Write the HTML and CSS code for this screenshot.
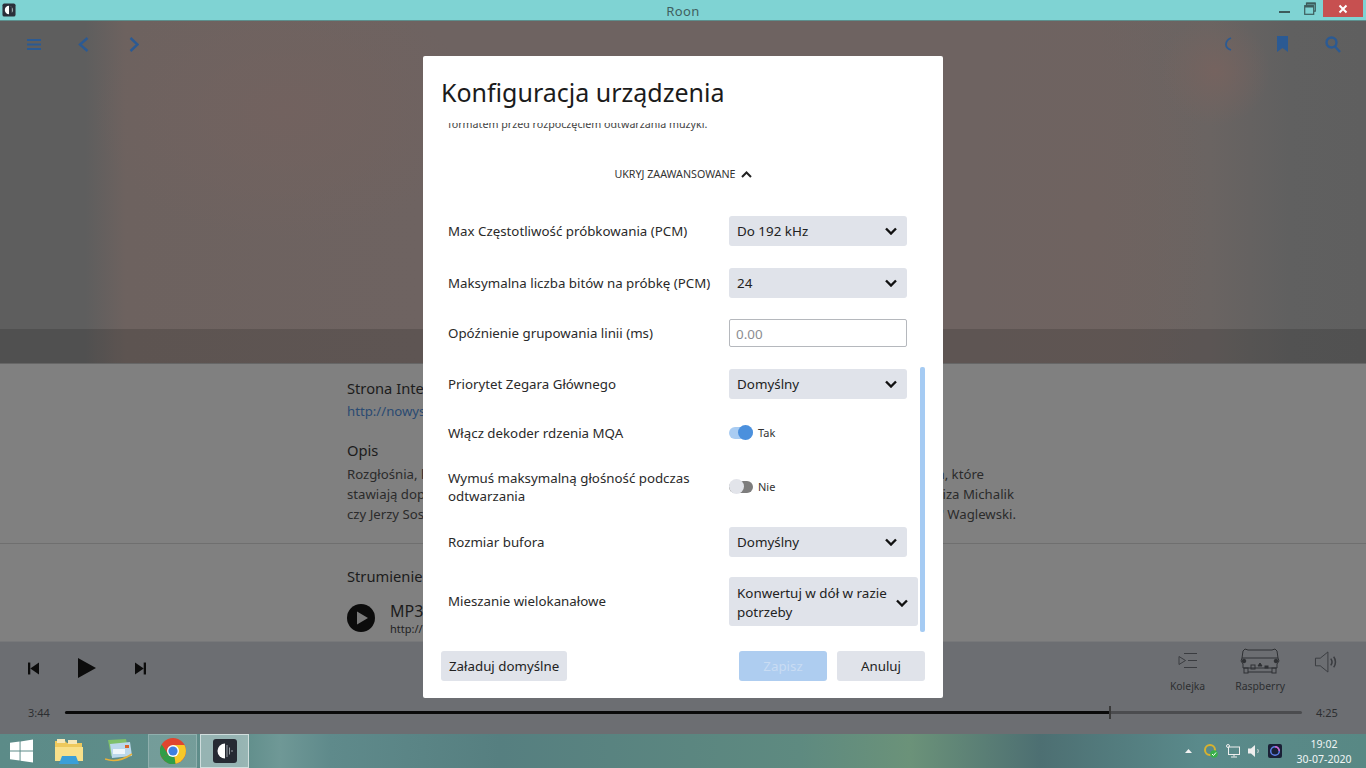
FILE: index.html
```html
<!DOCTYPE html>
<html lang="pl">
<head>
<meta charset="utf-8">
<title>Roon</title>
<link rel="stylesheet" href="styles.css">
</head>
<body>
<div class="screen">
  <header class="titlebar">
    <svg class="app-icon" width="14" height="14" viewBox="0 0 15 15"><rect x="0.5" y="0.5" width="14" height="14" rx="2" fill="#2b2f3a"/><path d="M7.5 3a4.5 4.5 0 0 0 0 9z" fill="#fff"/><path d="M7.5 3a4.5 4.5 0 0 1 3 7.8V4.2z" fill="#9aa"/></svg>
    <span class="title-text">Roon</span>
    <div class="win-controls">
      <svg class="win-min" width="11" height="2" viewBox="0 0 11 2"><rect width="11" height="2" fill="#3d5c5c"/></svg>
      <svg class="win-max" width="12" height="13" viewBox="0 0 12 13" fill="none" stroke="#3d5c5c" stroke-width="1.2"><rect x="0.7" y="3.7" width="9" height="8.6" fill="#7fd3d3"/><path d="M2.5 3.5V1h8.8v8.2H10"/><path d="M2.5 1.6h8.8" stroke-width="2"/><path d="M1 4.5h8.5" stroke-width="2"/></svg>
      <div class="win-close"><svg width="10" height="10" viewBox="0 0 10 10" stroke="#fff" stroke-width="2"><path d="M1.5 1.5l7 7M8.500 1.500l-7 7"/></svg></div>
    </div>
  </header>

  <main class="app">
    <section class="hero">
      <nav class="topnav">
        <div class="nav-group">
          <div class="nav-btn"><svg width="14" height="11" viewBox="0 0 14 11" fill="#2b5a93"><rect width="14" height="2"/><rect y="4.5" width="14" height="2"/><rect y="9" width="14" height="2"/></svg></div>
          <div class="nav-btn"><svg width="11" height="15" viewBox="0 0 11 15" fill="none" stroke="#2b5a93" stroke-width="2.4"><path d="M9.500 1L2 7.500 9.500 14"/></svg></div>
          <div class="nav-btn"><svg class="nudge" width="10" height="15" viewBox="0 0 10 15" fill="none" stroke="#2b5a93" stroke-width="2.4"><path d="M1.500 1L8.500 7.500 1.500 14"/></svg></div>
        </div>
        <div class="nav-group">
          <div class="nav-btn"><svg class="moon" width="7" height="14" viewBox="0 0 7 14" fill="none" stroke="#2b5a93" stroke-width="1.8"><path d="M6 1C2.500 2.500 1 5 1 7.500S3 12 6 13"/></svg></div>
          <div class="nav-btn"><svg width="11" height="16" viewBox="0 0 11 16" fill="#2b5a93"><path d="M0 0h11v16l-5.500-4L0 16z"/></svg></div>
          <div class="nav-btn"><svg width="16" height="17" viewBox="0 0 16 17" fill="none" stroke="#2b5a93" stroke-width="2.4"><circle cx="6.500" cy="6.500" r="5"/><path d="M10 10.500l5 5.500"/></svg></div>
        </div>
      </nav>
      <div class="hero-band"></div>
    </section>

    <section class="content">
      <div class="content-block">
        <h3 class="sec-title">Strona Inte</h3>
        <a class="link">http://nowysw</a>
        <h3 class="sec-title opis">Opis</h3>
        <p class="desc-line line-a"><span>Rozgłośnia, k</span><span>n, które</span></p>
        <p class="desc-line line-b"><span>stawiają dopi</span><span>liza Michalik</span></p>
        <p class="desc-line line-c"><span>czy Jerzy Sosn</span><span>" Waglewski.</span></p>
      </div>
      <div class="streams">
        <h3 class="sec-title">Strumienie</h3>
        <div class="stream">
          <svg width="28" height="28" viewBox="0 0 28 28"><circle cx="14" cy="14" r="14" fill="#0c0c0c"/><path d="M10 7.500l11 6.500-11 6.500z" fill="#7a7a7a"/></svg>
          <div class="stream-text">
            <div class="stream-name">MP3</div>
            <div class="stream-url">http://n</div>
          </div>
        </div>
      </div>
    </section>

    <footer class="player">
      <div class="player-top">
        <div class="transport">
          <svg width="11" height="13" viewBox="0 0 12 13" fill="#0c0c0c"><rect width="2.500" height="13"/><path d="M12 0v13L2.500 6.500z"/></svg>
          <svg class="t-play" width="18" height="20" viewBox="0 0 19 21" fill="#0c0c0c"><path d="M0 0l19 10.500L0 21z"/></svg>
          <svg width="11" height="13" viewBox="0 0 12 13" fill="#0c0c0c"><path d="M0 0v13l9.500-6.500z"/><rect x="9.500" width="2.500" height="13"/></svg>
        </div>
        <div class="outputs">
          <div class="out-item queue">
            <svg width="20" height="16" viewBox="0 0 20 16" fill="none" stroke="#3a3c40" stroke-width="1"><path d="M1 3.500v8l6.500-4zM6 .5h13M10 7.500h9M6 14.500h13"/></svg>
            <span>Kolejka</span>
          </div>
          <div class="out-item device">
            <svg width="40" height="26" viewBox="0 0 40 26" fill="none" stroke="#2f3134" stroke-width="1"><path d="M3 3l2-2 3 1h24l3-1 2 2 1 7H2z"/><path d="M2 10l-1 3 2 3v4h34v-4l2-3-1-3"/><circle cx="4" cy="13" r="1.800" fill="#2f3134"/><circle cx="36" cy="13" r="1.800" fill="#2f3134"/><rect x="4" y="20" width="4" height="5"/><rect x="32" y="20" width="4" height="5"/><path d="M8 24h24"/><rect x="11" y="17" width="4" height="4"/><path d="M18 18l2-3 2 3z" fill="#2f3134"/><rect x="25" y="18" width="3" height="2" fill="#2f3134"/></svg>
            <span>Raspberry</span>
          </div>
          <svg class="volume" width="24" height="22" viewBox="0 0 24 23" fill="none" stroke="#3a3c40"><path d="M1 7.500v8h5l8 6.500V1L6 7.500z" stroke-width="1"/><path d="M17 8c1.500 2 1.500 5 0 7" stroke-width="1.600"/><path d="M20 6c2.500 3 2.500 8 0 11" stroke-width="1.600"/></svg>
        </div>
      </div>
      <div class="progress-row">
        <span class="time">3:44</span>
        <div class="track"><div class="track-done"></div><div class="track-thumb"></div></div>
        <span class="time">4:25</span>
      </div>
    </footer>
  </main>

  <div class="taskbar">
    <svg class="win-logo" width="23" height="24" viewBox="0 0 24 24" fill="#fff"><path d="M0 3.500l10-1.400v9.300H0zM11 2l13-2v11.400H11zM0 12.500h10v9.400L0 20.500zM11 12.500h13V24l-13-1.900z"/></svg>
    <svg class="tb-icon explorer" width="30" height="27" viewBox="0 0 30 27"><path d="M1 3h10l2 2h15v18H1z" fill="#eec95c"/><path d="M3 1h8v4H3zM14 2h9v4h-9z" fill="#f6e8b8"/><path d="M1 9h28v14H1z" fill="#f8e08a"/><path d="M8 18h14l3 8H5z" fill="#3a9fd8"/></svg>
    <svg class="tb-icon mail" width="28" height="26" viewBox="0 0 28 26"><path d="M3 2l18-1 3 14-18 3z" fill="#7fc06b"/><path d="M5 6l20-2 2 14-20 2z" fill="#bcd8ec"/><path d="M8 11h12v5H8z" fill="#f0f6fb"/><path d="M20 7h4v3h-4z" fill="#d9642a"/><path d="M0 21c8 3 18 1 27-5" fill="none" stroke="#e6b23c" stroke-width="1.600"/></svg>
    <div class="tb-tile"><svg width="26" height="26" viewBox="0 0 26 26"><circle cx="13" cy="13" r="13" fill="#e0452f"/><path d="M13 13L2 20a13 13 0 0 0 14 6z" fill="#2f9e48"/><path d="M13 7h11.500a13 13 0 0 1-9 18.700z" fill="#f7c928"/><path d="M1.700 6.500L8 16 2 20A13 13 0 0 1 1.700 6.500z" fill="#2f9e48"/><circle cx="13" cy="13" r="6" fill="#fff"/><circle cx="13" cy="13" r="4.600" fill="#3f7fe0"/></svg></div>
    <div class="tb-tile active"><svg width="24" height="24" viewBox="0 0 24 24"><rect width="24" height="24" rx="3" fill="#262a33"/><path d="M12 4.500a7.500 7.500 0 0 0 0 15z" fill="#fff"/><path d="M14 6v12M16.500 8.500v7M19 11v2" stroke="#9aa0a8" stroke-width="1"/></svg></div>
    <div class="tray">
      <svg class="caret" width="7" height="4" viewBox="0 0 7 4" fill="#f2f2f2"><path d="M0 4l3.500-4L7 4z"/></svg>
      <svg width="14" height="14" viewBox="0 0 14 14"><circle cx="6" cy="6" r="5" fill="none" stroke="#d8b22e" stroke-width="2"/><circle cx="10" cy="10" r="3.800" fill="#38b04a"/><path d="M8 10l1.500 1.500L12 8.500" fill="none" stroke="#fff"/></svg>
      <svg width="14" height="14" viewBox="0 0 14 14" fill="none" stroke="#eee"><rect x="2.500" y="3" width="11" height="7.500"/><path d="M8 10.500v2M5 13h6"/><circle cx="2" cy="2" r="1.500"/></svg>
      <svg width="12" height="14" viewBox="0 0 12 14"><path d="M0 4.500h3L7 1v12L3 9.500H0z" fill="#eee"/><path d="M9.500 5c1 1.200 1 2.800 0 4" stroke="#cfd8d8" fill="none"/></svg>
      <svg width="14" height="14" viewBox="0 0 14 14"><rect width="14" height="14" rx="2" fill="#1a2036"/><circle cx="7" cy="7" r="4.300" fill="none" stroke="#5d7fe8" stroke-width="1.500"/><path d="M7 2.700A4.300 4.300 0 0 1 11.300 7" fill="none" stroke="#d063c9" stroke-width="1.500"/></svg>
      <div class="clock"><div>19:02</div><div>30-07-2020</div></div>
    </div>
  </div>

  <div class="modal">
    <h2 class="modal-title">Konfiguracja urządzenia</h2>
    <div class="modal-body">
      <p class="clipped">formatem przed rozpoczęciem odtwarzania muzyki.</p>
      <div class="advanced"><span>UKRYJ ZAAWANSOWANE</span><svg width="11" height="7" viewBox="0 0 11 7" fill="none" stroke="#222" stroke-width="2"><path d="M1 6l4.500-4.500L10 6"/></svg></div>
      <div class="row r1"><span class="label">Max Częstotliwość próbkowania (PCM)</span><div class="select"><span>Do 192 kHz</span><svg class="chev" width="12" height="8" viewBox="0 0 12 8" fill="none" stroke="#111" stroke-width="2.400"><path d="M1 1.500l5 5 5-5"/></svg></div></div>
      <div class="row r2"><span class="label">Maksymalna liczba bitów na próbkę (PCM)</span><div class="select"><span>24</span><svg class="chev" width="12" height="8" viewBox="0 0 12 8" fill="none" stroke="#111" stroke-width="2.400"><path d="M1 1.500l5 5 5-5"/></svg></div></div>
      <div class="row r3"><span class="label">Opóźnienie grupowania linii (ms)</span><div class="input">0.00</div></div>
      <div class="row r4"><span class="label">Priorytet Zegara Głównego</span><div class="select"><span>Domyślny</span><svg class="chev" width="12" height="8" viewBox="0 0 12 8" fill="none" stroke="#111" stroke-width="2.400"><path d="M1 1.500l5 5 5-5"/></svg></div></div>
      <div class="row r5"><span class="label">Włącz dekoder rdzenia MQA</span><div class="toggle on"><div class="tg-track"><div class="tg-knob"></div></div><span>Tak</span></div></div>
      <div class="row r6"><span class="label wrap">Wymuś maksymalną głośność podczas odtwarzania</span><div class="toggle off"><div class="tg-track"><div class="tg-knob"></div></div><span>Nie</span></div></div>
      <div class="row r7"><span class="label">Rozmiar bufora</span><div class="select"><span>Domyślny</span><svg class="chev" width="12" height="8" viewBox="0 0 12 8" fill="none" stroke="#111" stroke-width="2.400"><path d="M1 1.500l5 5 5-5"/></svg></div></div>
      <div class="row r8"><span class="label">Mieszanie wielokanałowe</span><div class="select tall"><span>Konwertuj w dół w razie potrzeby</span><svg class="chev" width="12" height="8" viewBox="0 0 12 8" fill="none" stroke="#111" stroke-width="2.400"><path d="M1 1.500l5 5 5-5"/></svg></div></div>
      <div class="scrollbar"></div>
    </div>
    <div class="modal-foot">
      <div class="btn">Załaduj domyślne</div>
      <div class="foot-right">
        <div class="btn primary">Zapisz</div>
        <div class="btn plain">Anuluj</div>
      </div>
    </div>
  </div>
</div>
</body>
</html>
```
FILE: styles.css
```css
* { box-sizing: border-box; }
html, body { margin: 0; padding: 0; }
body { font-family: "Noto Sans", sans-serif; color: #222; overflow: hidden; }
h2, h3, p { margin: 0; font-weight: 400; }

.screen { position: relative; width: 1366px; height: 768px; display: flex; flex-direction: column; overflow: hidden; background: #808080; }

.titlebar { height: 21px; flex: none; background: #7fd3d3; border-bottom: 1px solid #5c8f8d; display: flex; align-items: center; position: relative; padding-left: 2px; }
.app-icon { display: block; }
.title-text { position: absolute; left: 0; right: 0; top: 2px; text-align: center; font-size: 13px; line-height: 18px; color: #3f5f60; letter-spacing: .4px; }
.win-controls { position: absolute; right: 3px; top: 0; display: flex; }
.win-min { margin: 11px 14px 0 0; }
.win-max { margin: 2px 7px 0 0; }
.win-close { width: 40px; height: 17px; background: #c75050; display: flex; align-items: center; justify-content: center; }

.app { flex: 1; display: flex; flex-direction: column; min-height: 0; }
.hero { height: 343px; flex: none; position: relative; display: flex; flex-direction: column; justify-content: space-between;
  background:
    radial-gradient(ellipse 55px 55px at 1215px 50px, #75635f, transparent),
    radial-gradient(ellipse 120px 300px at 1090px 200px, #6f6360, transparent),
    radial-gradient(ellipse 190px 130px at 285px 90px, #72625f, transparent),
    linear-gradient(90deg, #5e5e5e 0, #5e5e5e 85px, #6d625f 125px, #6e6361 420px, #6e6361 1100px, #6a6462 1210px, #606060 1290px, #5f5f5f 100%);
}
.topnav { display: flex; justify-content: space-between; padding: 0 8.5px; height: 46px; }
.nav-group { display: flex; }
.nav-btn { width: 50px; height: 46px; display: flex; align-items: center; justify-content: center; }
.nudge { margin-left: 1px; }
.moon { margin-right: 9px; }
.hero-band { height: 35px; background: rgba(0,0,0,.14); border-bottom: 1px solid #666; }

.content { flex: 1; min-height: 0; background: #808080; overflow: hidden; display: flex; flex-direction: column; }
.content-block { padding: 14px 0 0 347px; height: 180px; border-bottom: 1px solid #6f6f6f; }
.sec-title { font-size: 14.7px; line-height: 20px; color: #1c1c1c; }
.link { display: block; font-size: 13.2px; line-height: 20px; margin-top: 3px; color: #2a4a72; }
.opis { margin-top: 19px; }
.desc-line { display: flex; justify-content: space-between; font-size: 13.2px; line-height: 20px; color: #2b2b2b; }
.line-a { width: 637px; margin-top: 4px; }
.line-b { width: 667px; }
.line-c { width: 669px; }
.streams { padding: 22px 0 0 347px; }
.stream { display: flex; align-items: center; gap: 15px; margin-top: 13px; }
.stream-text { margin-top: 2px; }
.stream-name { font-size: 16px; line-height: 20px; color: #1c1c1c; }
.stream-url { font-size: 11px; line-height: 16px; color: #222; }

.player { height: 93px; flex: none; background: #6c6e72; border-top: 1px solid #77787a; display: flex; flex-direction: column; justify-content: space-between; }
.player-top { display: flex; justify-content: space-between; padding: 6px 28px 0 28px; }
.transport { display: flex; align-items: center; height: 40px; }
.t-play { margin: 0 39px; }
.outputs { display: flex; align-items: flex-start; }
.out-item { display: flex; flex-direction: column; align-items: center; font-size: 10.4px; line-height: 14px; color: #2c2e31; }
.queue svg { margin: 5px 0 10px; }
.device { margin-left: 30px; }
.device svg { margin: 0 0 5px; }
.volume { margin: 3px 0 0 29px; }
.progress-row { display: flex; align-items: center; padding: 0 28px 14px 28px; }
.time { font-size: 11px; line-height: 14px; color: #2c2e31; width: 37px; }
.time:last-child { width: 22px; margin-left: 14px; }
.track { flex: 1; height: 3px; margin-bottom: 2px; background: #4b4c4f; position: relative; border-radius: 2px; }
.track-done { width: 1045px; height: 3px; background: #0a0a0a; border-radius: 2px; }
.track-thumb { position: absolute; left: 1044px; top: -5px; width: 2px; height: 13px; background: #3a3a3a; }

.taskbar { height: 34px; flex: none; display: flex; align-items: center; padding-left: 10px; background: linear-gradient(90deg, #5c8b88 0, #5f8d8a 240px, #6f9896 280px, #5f8a8b 330px, #567f80 500px, #5e8a80 800px, #6b9279 910px, #4d6f72 1040px, #5a8a8b 1200px, #588884 100%); }
.win-logo { margin-right: 21px; }
.explorer { margin-right: 21px; }
.mail { margin-right: 15px; }
.tb-tile { width: 49px; height: 34px; background: rgba(255,255,255,.14); border: 1px solid rgba(255,255,255,.2); display: flex; align-items: center; justify-content: center; margin-right: 3px; }
.tb-tile.active { background: rgba(255,255,255,.35); border-color: rgba(255,255,255,.55); }
.tray { margin-left: auto; display: flex; align-items: center; gap: 8px; padding-right: 6px; }
.caret { margin-right: 4px; }
.clock { width: 72px; margin-left: -2px; padding-top: 1px; font-size: 10.5px; line-height: 15px; text-align: center; color: #f1f5f5; }

.modal { position: absolute; left: 423px; top: 56px; width: 520px; height: 642px; background: #fff; border-radius: 2px; display: flex; flex-direction: column; }
.modal-title { font-size: 25px; line-height: 36px; padding: 18px 0 0 18px; color: #1b1b1b; height: 67px; flex: none; }
.modal-body { position: relative; flex: 1; min-height: 0; overflow: hidden; padding: 0 0 0 25px; }
.clipped { font-size: 10.7px; line-height: 16px; color: #444; margin-top: -7px; }
.advanced { display: flex; justify-content: center; align-items: center; gap: 5px; font-size: 10.7px; line-height: 16px; color: #333; padding-right: 25px; margin-top: 34px; }
.row { display: flex; align-items: center; }
.r1 { margin-top: 34px; height: 30px; }
.r2 { margin-top: 22px; height: 30px; }
.r3 { margin-top: 21px; height: 28px; }
.r4 { margin-top: 22px; height: 30px; }
.r5 { margin-top: 24px; height: 20px; }
.r6 { margin-top: 25px; height: 37px; }
.r7 { margin-top: 22px; height: 30px; }
.r8 { margin-top: 20px; height: 49px; }
.r8 .label { margin-top: -2px; }
.label { width: 281px; flex: none; font-size: 13.3px; line-height: 18px; color: #2a2a2a; }
.label.wrap { width: 260px; margin-right: 21px; }
.select { width: 178px; height: 30px; background: #e0e3ea; border-radius: 3px; display: flex; align-items: center; justify-content: space-between; padding: 0 10px 0 8px; font-size: 13.4px; line-height: 19px; color: #222; }
.select.tall { width: 189px; height: 49px; padding-top: 2px; }
.select.tall span { width: 160px; }
.input { width: 178px; height: 28px; border: 1px solid #b5b8bd; border-radius: 2px; padding: 0 6px; font-size: 13.4px; line-height: 28px; color: #8b8d91; }
.toggle { display: flex; align-items: center; font-size: 11px; line-height: 14px; color: #333; }
.tg-track { width: 24px; height: 12px; border-radius: 6px; position: relative; margin-right: 5px; }
.tg-knob { position: absolute; top: -2px; width: 15px; height: 15px; border-radius: 50%; }
.on .tg-track { background: #a9ccf2; }
.on .tg-knob { right: 0; background: #4b90dd; }
.off .tg-track { background: #7d7d7d; }
.off .tg-knob { left: 0; background: #e2e4ea; }
.scrollbar { position: absolute; left: 497px; top: 244px; width: 5px; height: 265px; background: #a5cbf3; border-radius: 2px; }
.modal-foot { height: 65px; flex: none; display: flex; justify-content: space-between; padding: 18px 18px 0; align-items: flex-start; }
.foot-right { display: flex; gap: 10px; }
.btn { height: 30px; padding: 0 8px; background: #e0e3ea; border-radius: 3px; font-size: 13.3px; line-height: 30px; color: #222; text-align: center; }
.btn.primary, .btn.plain { width: 88px; }
.btn.primary { background: #aecdf0; color: #c9dcf3; }
```
